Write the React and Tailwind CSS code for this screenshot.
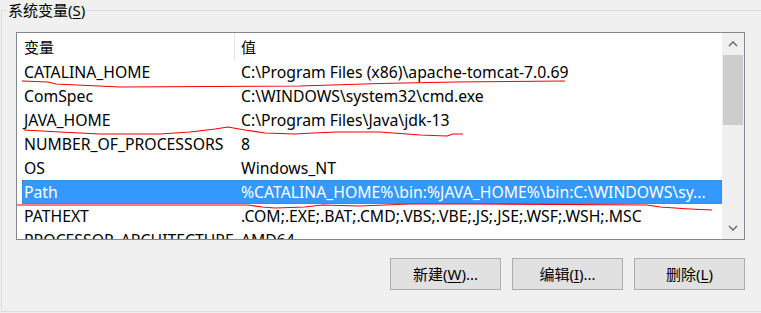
import React from "react";

const rows = [
  ["CATALINA_HOME", "C:\\Program Files (x86)\\apache-tomcat-7.0.69"],
  ["ComSpec", "C:\\WINDOWS\\system32\\cmd.exe"],
  ["JAVA_HOME", "C:\\Program Files\\Java\\jdk-13"],
  ["NUMBER_OF_PROCESSORS", "8"],
  ["OS", "Windows_NT"],
  ["Path", "%CATALINA_HOME%\\bin:%JAVA_HOME%\\bin:C:\\WINDOWS\\sy..."],
  ["PATHEXT", ".COM;.EXE;.BAT;.CMD;.VBS;.VBE;.JS;.JSE;.WSF;.WSH;.MSC"],
  ["PROCESSOR_ARCHITECTURE", "AMD64"],
];

const font = { fontFamily: '"Noto Sans", "Noto Sans CJK SC", sans-serif' };

const Button = ({ label, hotkey, tail }) => (
  <button className="w-[111px] h-[32px] bg-[#e1e1e1] border border-[#adadad] text-[15px] text-black flex items-center justify-center">
    <span>
      {label}(<span className="underline underline-offset-2">{hotkey}</span>){tail}
    </span>
  </button>
);

export default function App() {
  return (
    <div
      className="relative w-[761px] h-[313px] bg-[#f0f0f0] overflow-hidden text-black"
      style={font}
    >
      {/* group box */}
      <div className="ml-[1px] mt-[10px] h-[302px] border-t border-l border-b border-[#dcdcdc]">
        <div className="ml-[14px] mt-[21px] w-[729px]">
          {/* list view */}
          <div className="h-[208px] border border-[#828790] bg-white flex overflow-hidden">
            <div className="w-[705px] flex flex-col text-[15.75px] leading-[20px]">
              <div className="h-[27px] shrink-0 flex items-center text-[15px]">
                <div className="w-[217px] pl-[7px]">变量</div>
                <div className="h-[27px] w-px bg-[#e5e5e5]" />
                <div className="pl-[6px]">值</div>
              </div>
              <div className="pl-[5px] flex flex-col">
                {rows.map(([name, value]) => {
                  const selected = name === "Path";
                  return (
                    <div
                      key={name}
                      className={
                        selected
                          ? "h-[24px] shrink-0 w-[700px] flex items-center bg-[#3399ff] text-white border border-dotted border-[#a06840]"
                          : "h-[24px] shrink-0 w-[700px] flex items-center border border-transparent"
                      }
                    >
                      <div className="w-[212px] pl-[1px] whitespace-nowrap">{name}</div>
                      <div className="pl-[6px] whitespace-nowrap">{value}</div>
                    </div>
                  );
                })}
              </div>
            </div>
            {/* scrollbar */}
            <div className="w-[22px] bg-[#f0f0f0] flex flex-col items-center">
              <div className="h-[22px] w-full flex items-center justify-center">
                <svg width="10" height="6" viewBox="0 0 10 6">
                  <path d="M1 5 L5 1 L9 5" fill="none" stroke="#606060" strokeWidth="1.3" />
                </svg>
              </div>
              <div className="w-[20px] h-[70px] bg-[#cdcdcd]" />
              <div className="flex-1" />
              <div className="h-[22px] w-full flex items-center justify-center">
                <svg width="10" height="6" viewBox="0 0 10 6">
                  <path d="M1 1 L5 5 L9 1" fill="none" stroke="#606060" strokeWidth="1.3" />
                </svg>
              </div>
            </div>
          </div>
          {/* buttons */}
          <div className="mt-[18px] flex justify-end gap-[11px]">
            <Button label="新建" hotkey="W" tail="..." />
            <Button label="编辑" hotkey="I" tail="..." />
            <Button label="删除" hotkey="L" tail="" />
          </div>
        </div>
      </div>

      {/* group title */}
      <div className="absolute left-[7px] top-0 px-[1px] bg-[#f0f0f0] text-[15px] leading-[20px]">
        系统变量(<span className="underline underline-offset-2">S</span>)
      </div>

      {/* red hand-drawn underlines */}
      <svg
        className="absolute inset-0 pointer-events-none"
        width="761"
        height="313"
        viewBox="0 0 761 313"
      >
        <g fill="none" stroke="#ff0000" strokeWidth="1.2" strokeLinejoin="round">
          <polyline points="22,81 48,82 56,84 120,87 300,86 380,83.5 455,82 565,81" />
          <polyline points="24,130 60,132 100,134 160,134 190,132 215,129 228,127 245,130 265,133 295,134 313,133 337,132 380,132 420,135 447,136 453,134 463,134" />
          <polyline points="17,205 248,205 262,207 275,208 305,207 322,205 360,206 410,204 477,204 647,205 660,207 690,209 712,210" />
        </g>
      </svg>
    </div>
  );
}
